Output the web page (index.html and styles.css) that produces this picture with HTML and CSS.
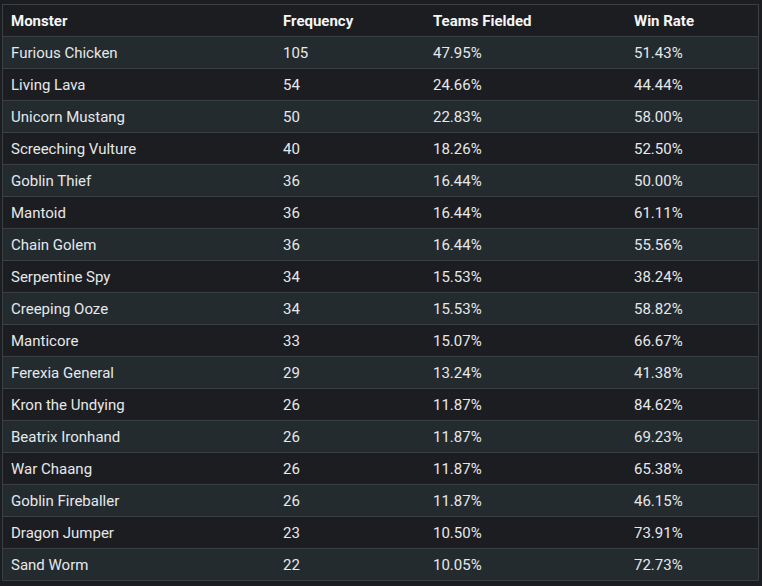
FILE: index.html
```html
<!DOCTYPE html>
<html>
<head>
<meta charset="utf-8">
<link rel="stylesheet" href="styles.css">
</head>
<body>
<div class="wrap">
<table class="stats">
<colgroup><col class="c1"><col class="c2"><col class="c3"><col class="c4"></colgroup>
<thead>
<tr><th>Monster</th><th>Frequency</th><th>Teams Fielded</th><th>Win Rate</th></tr>
</thead>
<tbody>
<tr><td>Furious Chicken</td><td>105</td><td>47.95%</td><td>51.43%</td></tr>
<tr><td>Living Lava</td><td>54</td><td>24.66%</td><td>44.44%</td></tr>
<tr><td>Unicorn Mustang</td><td>50</td><td>22.83%</td><td>58.00%</td></tr>
<tr><td>Screeching Vulture</td><td>40</td><td>18.26%</td><td>52.50%</td></tr>
<tr><td>Goblin Thief</td><td>36</td><td>16.44%</td><td>50.00%</td></tr>
<tr><td>Mantoid</td><td>36</td><td>16.44%</td><td>61.11%</td></tr>
<tr><td>Chain Golem</td><td>36</td><td>16.44%</td><td>55.56%</td></tr>
<tr><td>Serpentine Spy</td><td>34</td><td>15.53%</td><td>38.24%</td></tr>
<tr><td>Creeping Ooze</td><td>34</td><td>15.53%</td><td>58.82%</td></tr>
<tr><td>Manticore</td><td>33</td><td>15.07%</td><td>66.67%</td></tr>
<tr><td>Ferexia General</td><td>29</td><td>13.24%</td><td>41.38%</td></tr>
<tr><td>Kron the Undying</td><td>26</td><td>11.87%</td><td>84.62%</td></tr>
<tr><td>Beatrix Ironhand</td><td>26</td><td>11.87%</td><td>69.23%</td></tr>
<tr><td>War Chaang</td><td>26</td><td>11.87%</td><td>65.38%</td></tr>
<tr><td>Goblin Fireballer</td><td>26</td><td>11.87%</td><td>46.15%</td></tr>
<tr><td>Dragon Jumper</td><td>23</td><td>10.50%</td><td>73.91%</td></tr>
<tr><td>Sand Worm</td><td>22</td><td>10.05%</td><td>72.73%</td></tr>
</tbody>
</table>
</div>
</body>
</html>
```
FILE: styles.css
```css
html, body {
  margin: 0;
  padding: 0;
  background: #1c1d21;
}
body {
  font-family: Roboto, "Liberation Sans", sans-serif;
  font-size: 15px;
  color: #e6e8ea;
}
.wrap {
  margin: 4px 3px 0 2px;
  border: 1px solid #3a3f44;
  border-bottom: none;
}
.stats {
  width: 100%;
  border-collapse: collapse;
  table-layout: fixed;
}
.c1 { width: 272px; }
.c2 { width: 150px; }
.c3 { width: 201px; }
.c4 { width: auto; }
.stats th, .stats td {
  text-align: left;
  padding: 0 8px;
  height: 31px;
  border-bottom: 1px solid #3a3f44;
  white-space: nowrap;
}
.stats th {
  font-weight: 700;
  color: #f4f5f6;
  background: #1c1d21;
}
.stats tbody tr:nth-child(odd) td {
  background: #232b2f;
}
.stats tbody tr:nth-child(even) td {
  background: #1c1d21;
}
```
